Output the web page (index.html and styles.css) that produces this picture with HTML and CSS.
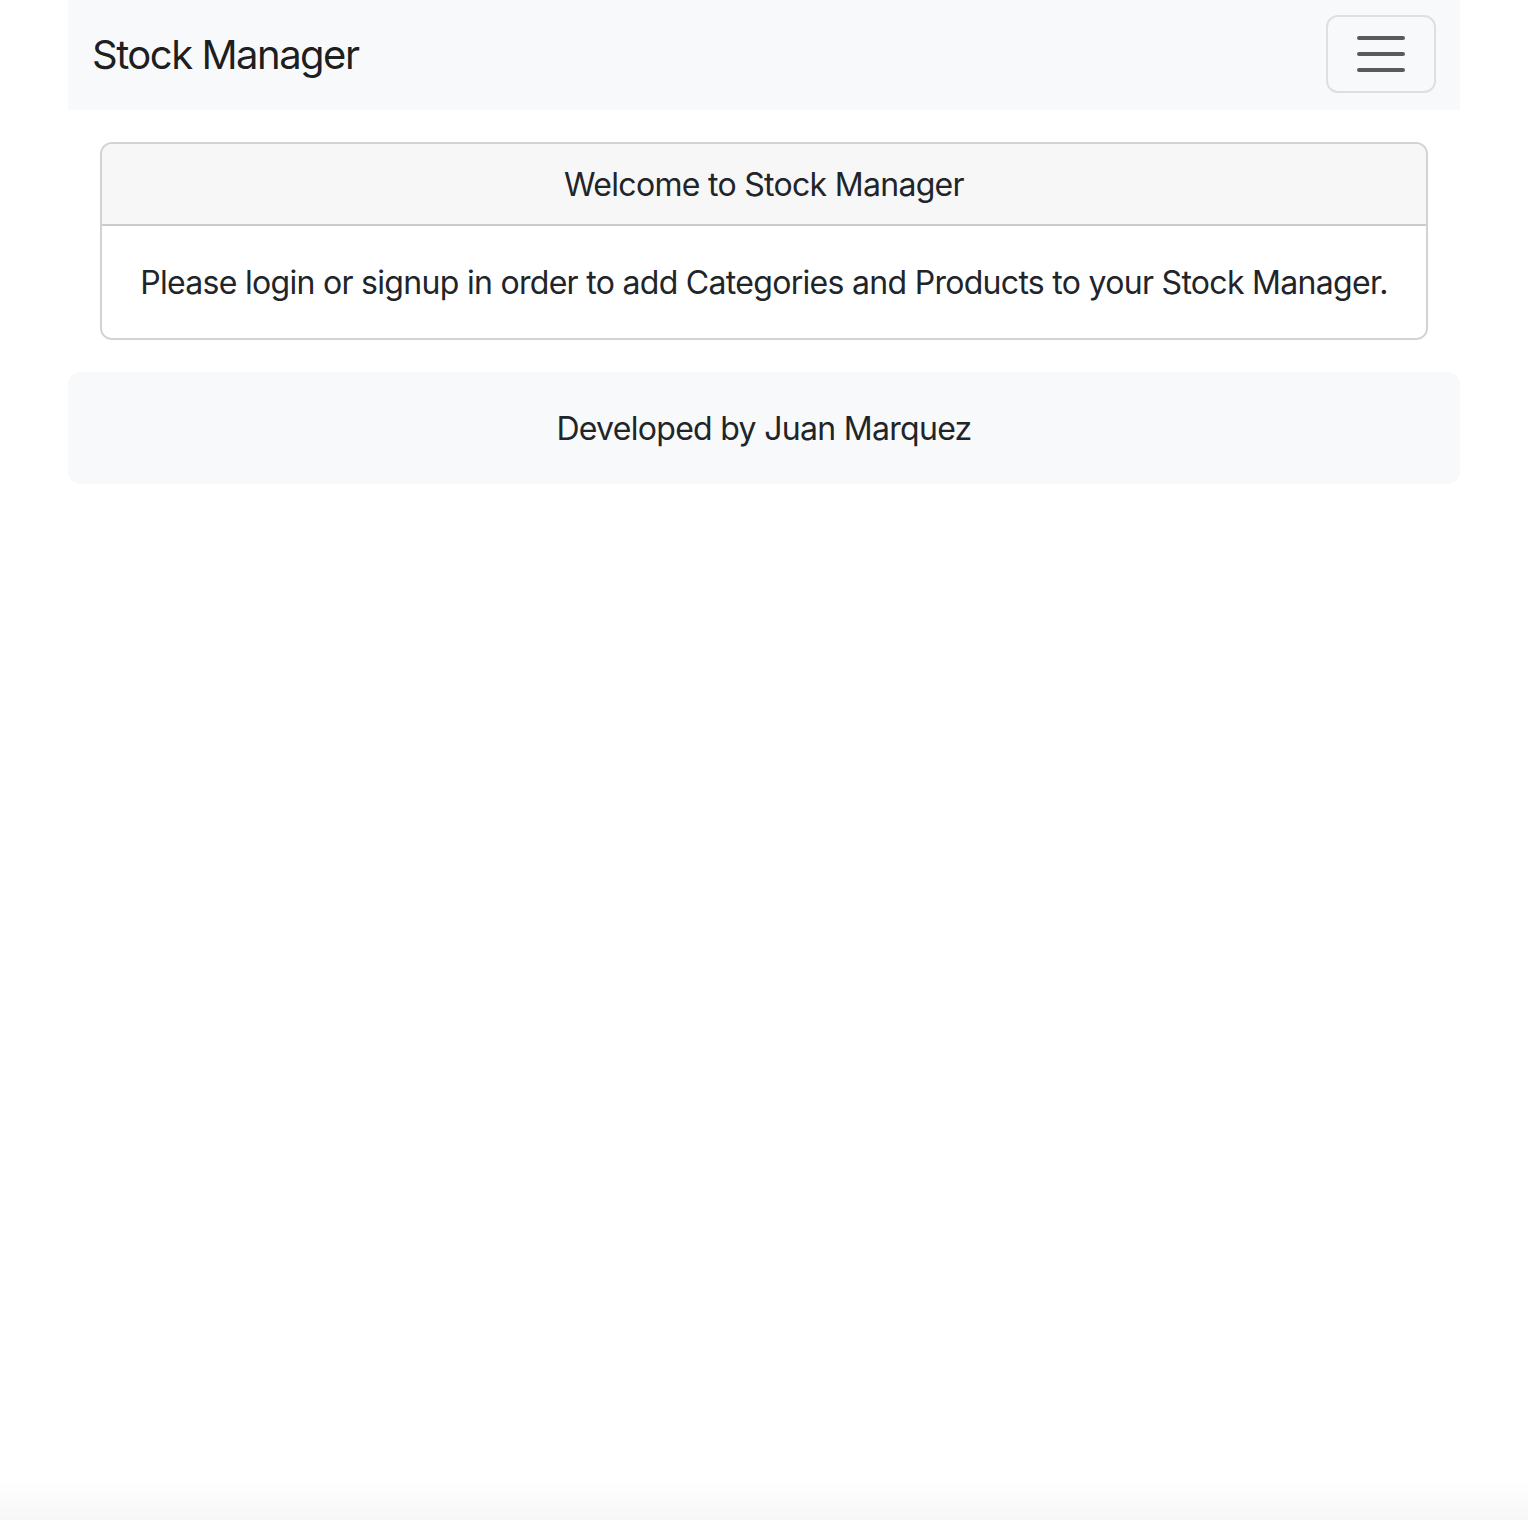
FILE: index.html
```html
<!DOCTYPE html>
<html lang="en">
<head>
<meta charset="utf-8">
<title>Stock Manager</title>
<link rel="stylesheet" href="styles.css">
</head>
<body>
<div class="container">
  <nav class="navbar">
    <a class="brand" href="#">Stock Manager</a>
    <button class="toggler" type="button" aria-label="Toggle navigation">
      <svg class="toggler-icon" viewBox="0 0 30 30" width="60" height="60" aria-hidden="true">
        <path d="M4 7h22M4 15h22M4 23h22" stroke="rgba(33,37,41,0.75)" stroke-width="2" stroke-linecap="round" stroke-miterlimit="10" fill="none"/>
      </svg>
    </button>
  </nav>
  <main class="main">
    <div class="card">
      <div class="card-header">Welcome to Stock Manager</div>
      <div class="card-body">Please login or signup in order to add Categories and Products to your Stock Manager.</div>
    </div>
  </main>
  <footer class="footer">Developed by Juan Marquez</footer>
</div>
</body>
</html>
```

FILE: styles.css
```css
html {
  min-height: 100%;
  background: linear-gradient(to bottom, #ffffff calc(100% - 40px), #f7f7f7 100%);
}
* { box-sizing: border-box; }
body {
  margin: 0;
  font-family: Inter, "Noto Sans", "Liberation Sans", sans-serif;
  font-size: 32px;
  line-height: 48px;
  letter-spacing: -0.7px;
  color: #212529;
}
.container {
  width: 1392px;
  margin: 0 auto;
}
.navbar {
  display: flex;
  align-items: flex-start;
  justify-content: space-between;
  background: #f8f9fa;
  padding: 15px 24px 0;
  height: 110px;
}
.brand {
  font-size: 40px;
  line-height: 60px;
  letter-spacing: -1.5px;
  padding: 10px 0;
  color: rgba(0,0,0,0.9);
  text-decoration: none;
}
.toggler {
  flex: 0 0 110px;
  width: 110px;
  height: 78px;
  padding: 8px 24px;
  margin: 0;
  background: transparent;
  border: 2px solid rgba(0,0,0,0.1);
  border-radius: 12px;
  display: flex;
  align-items: center;
  justify-content: center;
}
.toggler-icon { display: block; flex: 0 0 60px; }
.main {
  padding: 32px 32px 0;
}
.card {
  border: 2px solid rgba(0,0,0,0.175);
  border-radius: 12px;
  overflow: hidden;
  text-align: center;
}
.card-header {
  background: #f7f7f7;
  padding: 17px 32px 15px;
  border-bottom: 2px solid rgba(0,0,0,0.175);
}
.card-body {
  padding: 33px 32px 31px;
  background: #fff;
}
.footer {
  margin-top: 32px;
  background: #f8f9fa;
  border-radius: 12px;
  padding: 33px 32px 31px;
  text-align: center;
}
```
